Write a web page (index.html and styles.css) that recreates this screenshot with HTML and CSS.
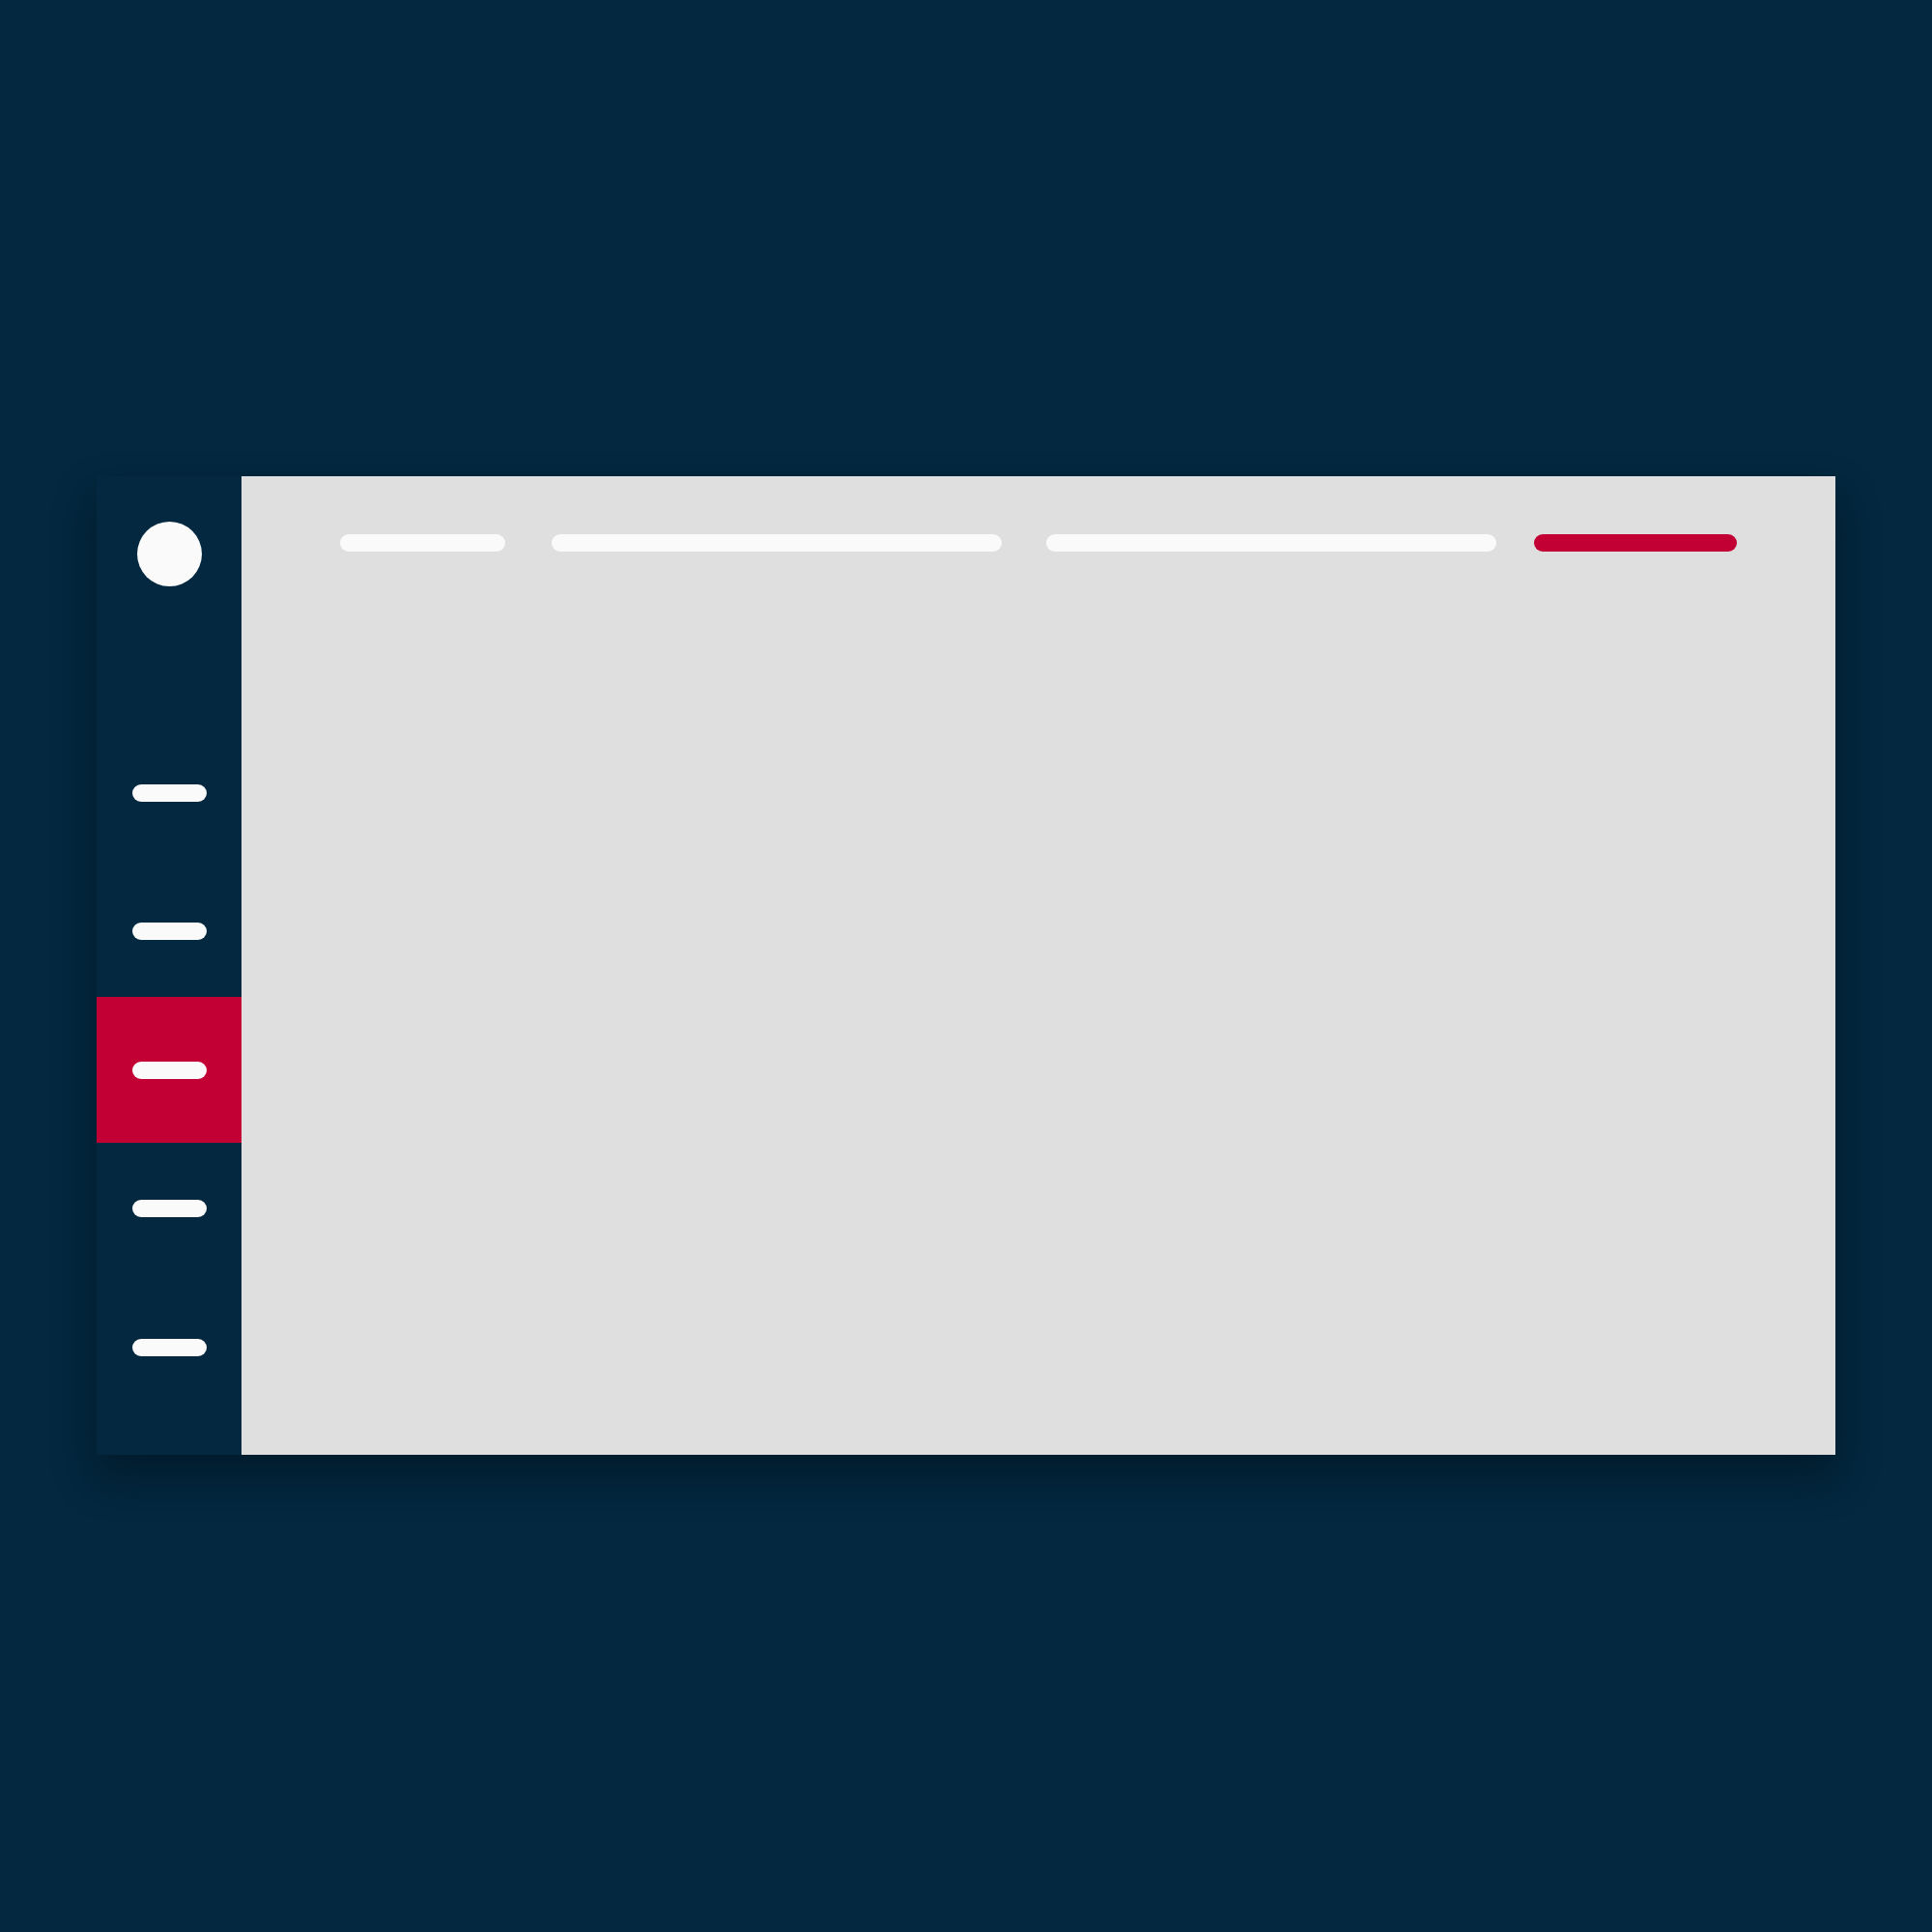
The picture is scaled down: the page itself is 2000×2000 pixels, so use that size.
FILE: index.html
```html
<!DOCTYPE html>
<html lang="en">
<head>
<meta charset="utf-8">
<title>Dashboard</title>
<link rel="stylesheet" href="styles.css">
</head>
<body>
<div class="frame">
  <aside class="sidebar">
    <div class="avatar"></div>
    <nav class="nav">
      <div class="nav-item"><span class="nav-bar"></span></div>
      <div class="nav-item"><span class="nav-bar"></span></div>
      <div class="nav-item active"><span class="nav-bar"></span></div>
      <div class="nav-item"><span class="nav-bar"></span></div>
      <div class="nav-item"><span class="nav-bar"></span></div>
    </nav>
  </aside>
  <main class="main">
    <div class="topbar">
      <span class="tab tab-short"></span>
      <span class="tab tab-long tab-2"></span>
      <span class="tab tab-long tab-3"></span>
      <span class="tab tab-cta"></span>
    </div>
  </main>
</div>
</body>
</html>
```
FILE: styles.css
```css
html, body {
  margin: 0;
  padding: 0;
}
body {
  background: #03283f;
  font-family: "Liberation Sans", Arial, sans-serif;
  padding: 493px 100px 0 100px;
  min-height: 2000px;
  box-sizing: border-box;
}
.frame {
  display: flex;
  width: 1800px;
  height: 1013px;
  box-shadow: 0 22px 40px rgba(0, 10, 20, 0.45);
}
.sidebar {
  width: 150px;
  flex: none;
  background: #03283f;
  display: flex;
  flex-direction: column;
  align-items: center;
  padding-top: 47px;
  box-sizing: border-box;
}
.avatar {
  width: 67px;
  height: 67px;
  border-radius: 50%;
  background: #fafafa;
}
.nav {
  align-self: stretch;
  display: flex;
  flex-direction: column;
  margin-top: 138px;
}
.nav-item {
  height: 151px;
  display: flex;
  align-items: center;
  justify-content: center;
}
.nav-item + .nav-item {
  margin-top: -7.5px;
}
.nav-item.active {
  background: #c30033;
  position: relative;
}
.nav-bar {
  width: 77px;
  height: 18px;
  border-radius: 9px;
  background: #fafafa;
  margin-left: 1px;
}
.main {
  flex: 1;
  background: #dfdfdf;
  padding: 60px 0 0 102px;
  box-sizing: border-box;
}
.topbar {
  display: flex;
  align-items: center;
}
.tab {
  display: block;
  height: 18px;
  border-radius: 9px;
  background: #fafafa;
}
.tab-short {
  width: 171px;
}
.tab-long {
  width: 466px;
}
.tab-2 {
  margin-left: 48px;
}
.tab-3 {
  margin-left: 46px;
}
.tab-cta {
  width: 210px;
  margin-left: 39px;
  background: #c30033;
}
```
